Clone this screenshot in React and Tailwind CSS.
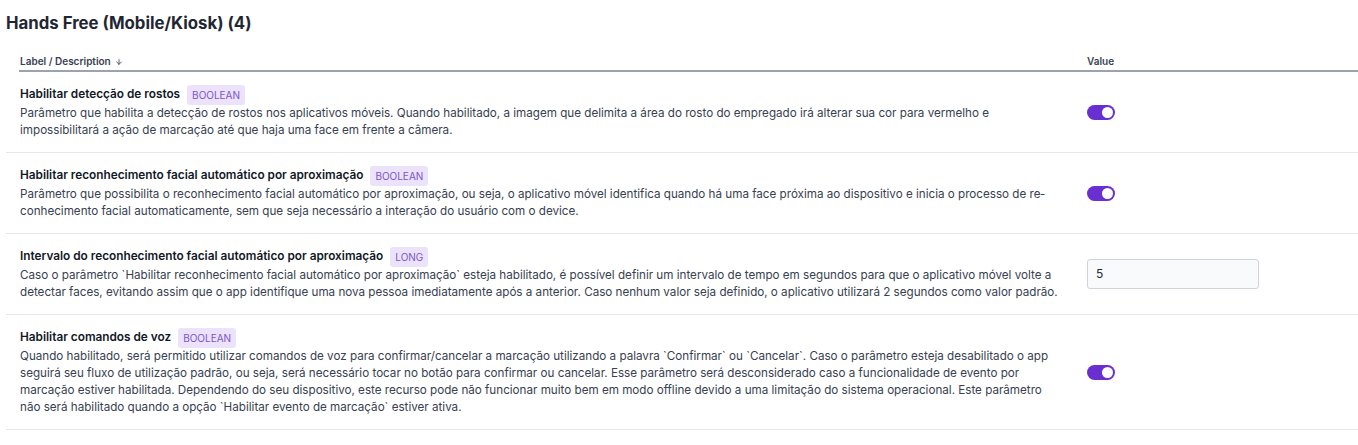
import { ArrowDown } from "lucide-react";

const params = [
  {
    label: "Habilitar detecção de rostos",
    type: "BOOLEAN",
    description:
      "Parâmetro que habilita a detecção de rostos nos aplicativos móveis. Quando habilitado, a imagem que delimita a área do rosto do empregado irá alterar sua cor para vermelho e impossibilitará a ação de marcação até que haja uma face em frente a câmera.",
    value: true,
  },
  {
    label: "Habilitar reconhecimento facial automático por aproximação",
    type: "BOOLEAN",
    description:
      "Parâmetro que possibilita o reconhecimento facial automático por aproximação, ou seja, o aplicativo móvel identifica quando há uma face próxima ao dispositivo e inicia o processo de re\u00ADconhecimento facial automaticamente, sem que seja necessário a interação do usuário com o device.",
    value: true,
  },
  {
    label: "Intervalo do reconhecimento facial automático por aproximação",
    type: "LONG",
    description:
      "Caso o parâmetro `Habilitar reconhecimento facial automático por aproximação` esteja habilitado, é possível definir um intervalo de tempo em segundos para que o aplicativo móvel volte a detectar faces, evitando assim que o app identifique uma nova pessoa imediatamente após a anterior. Caso nenhum valor seja definido, o aplicativo utilizará 2 segundos como valor padrão.",
    value: "5",
  },
  {
    label: "Habilitar comandos de voz",
    type: "BOOLEAN",
    description:
      "Quando habilitado, será permitido utilizar comandos de voz para confirmar/cancelar a marcação utilizando a palavra `Confirmar` ou `Cancelar`. Caso o parâmetro esteja desabilitado o app seguirá seu fluxo de utilização padrão, ou seja, será necessário tocar no botão para confirmar ou cancelar. Esse parâmetro será desconsiderado caso a funcionalidade de evento por marcação estiver habilitada. Dependendo do seu dispositivo, este recurso pode não funcionar muito bem em modo offline devido a uma limitação do sistema operacional. Este parâmetro não será habilitado quando a opção `Habilitar evento de marcação` estiver ativa.",
    value: true,
  },
];

const Toggle = () => (
  <div className="w-[28px] h-[15px] rounded-full bg-[#6a2fd1] flex items-center justify-end px-[2px]">
    <div className="w-[11px] h-[11px] rounded-full bg-white" />
  </div>
);

export default function App() {
  return (
    <div
      className="bg-white w-[1358px] h-[445px] overflow-hidden text-[#1f2937]"
      style={{ fontFamily: "Inter, 'Noto Sans', sans-serif" }}
    >
      {/* Title */}
      <h2 className="pl-[6px] pt-[12px] text-[16.8px] leading-[22px] font-bold text-[#1f2733]">
        Hands Free (Mobile/Kiosk) (4)
      </h2>

      <div className="mt-[17px] pl-[6px]">
        {/* Header */}
        <div className="ml-[13px] flex items-end h-[21px] border-b-2 border-[#9ca3af] text-[10px] font-semibold text-[#374151]">
          <div className="w-[1068px] pl-[1px] pb-[1px] flex items-center gap-[4px]">
            Label / Description
            <ArrowDown className="w-[8px] h-[8px]" strokeWidth={2.5} />
          </div>
          <div className="pb-[1px]">Value</div>
        </div>

        {/* Rows */}
        {params.map((p) => (
          <div
            key={p.label}
            className="flex items-center border-b border-[#e5e7eb] pl-[14px] py-[13px]"
          >
            <div className="w-[1045px]">
              <div className="flex items-center h-[20px] gap-[7px]">
                <span className="text-[11.8px] font-semibold text-[#111827]">
                  {p.label}
                </span>
                <span className="h-[20px] px-[5px] rounded-[3px] bg-[#ece2fc] text-[#7b55c9] text-[10px] flex items-center">
                  {p.type}
                </span>
              </div>
              <p className="text-[11.65px] leading-[17px] text-[#374151]">
                {p.description}
              </p>
            </div>
            <div className="ml-[22px]">
              {typeof p.value === "boolean" ? (
                <Toggle />
              ) : (
                <div className="w-[172px] h-[30px] rounded-[3px] border border-[#cfd4da] bg-[#f8fafc] flex items-center px-[8px] text-[12px] text-[#1f2937]">
                  {p.value}
                </div>
              )}
            </div>
          </div>
        ))}
      </div>
    </div>
  );
}
